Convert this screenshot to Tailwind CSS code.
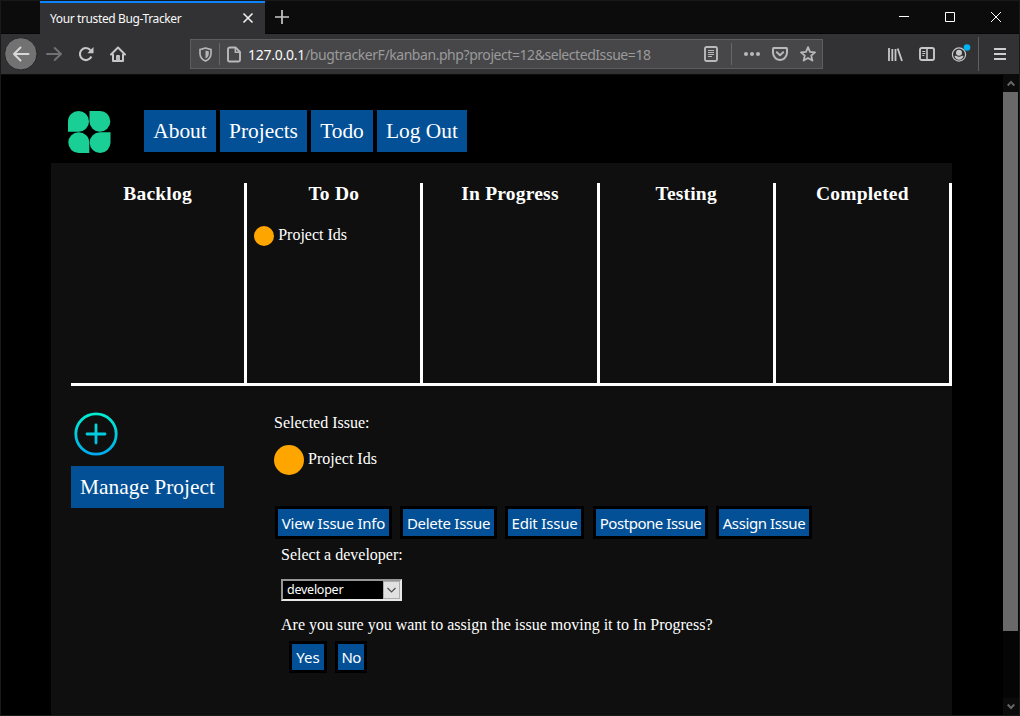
<!DOCTYPE html>
<html lang="en">
<head>
<meta charset="utf-8">
<title>Your trusted Bug-Tracker</title>
<script src="https://cdn.jsdelivr.net/npm/@tailwindcss/browser@4"></script>
</head>
<body class="w-[1020px] h-[716px] overflow-hidden bg-black text-white">
<div class="relative flex flex-col w-[1020px] h-[716px] overflow-hidden border border-[#191919] font-['Noto_Sans',sans-serif]">
  <!-- Tab strip -->
  <header class="flex h-[33px] shrink-0 bg-[#0c0c0d] border-b border-[#050505]">
    <div class="flex items-center w-[225px] h-[33px] ml-[39px] pl-[10px] pr-[11px] border-t-2 border-[#0a84ff] bg-[#323234]">
      <span class="text-[12px] leading-[16px] tracking-[-0.38px] whitespace-nowrap text-[#f9f9fa]">Your trusted Bug-Tracker</span>
      <svg class="ml-auto mb-[2px]" width="12" height="12" viewBox="0 0 12 12" fill="none" stroke="#f0f0f0" stroke-width="1.600"><path d="M1.500 1.500l9 9M10.500 1.500l-9 9"/></svg>
    </div>
    <svg class="ml-[9px] mt-[8px]" width="16" height="16" viewBox="0 0 16 16" fill="none" stroke="#c8c8c9" stroke-width="1.700"><path d="M1 8h14M8 1v14"/></svg>
    <div class="flex ml-auto mr-[18px] mt-[10px] gap-[35px]">
      <svg width="11" height="11" viewBox="0 0 11 11" stroke="#fff" fill="none"><path d="M1 5.500h10"/></svg>
      <svg width="11" height="11" viewBox="0 0 11 11" stroke="#fff" fill="none"><path d="M1.500 1.500h9v9h-9z"/></svg>
      <svg width="11" height="11" viewBox="0 0 11 11" stroke="#fff" fill="none"><path d="M1 1l10 10M11 1L1 11"/></svg>
    </div>
  </header>
  <!-- Navigation toolbar -->
  <div class="flex items-center h-[41px] shrink-0 bg-[#323234] border-b border-[#0c0c0d] pl-[3px]">
    <svg width="34" height="34" viewBox="0 0 34 34" fill="none"><circle cx="16.800" cy="16.800" r="16.200" fill="#727273" stroke="#242425"/><path d="M24.500 17H10M16.500 10.500L10 17l6.500 6.500" stroke="#d8d8d8" stroke-width="2" stroke-linecap="round" stroke-linejoin="round"/></svg>
    <svg class="ml-[7px]" width="18" height="16" viewBox="0 0 18 16" fill="none" stroke="#717172" stroke-width="2" stroke-linecap="round" stroke-linejoin="round"><path d="M2 8h14M9.700 2L16 8l-6.300 6"/></svg>
    <svg class="ml-[15px]" width="16" height="16" viewBox="0 0 16 16" fill="none" stroke="#c7c7c8" stroke-width="2.100"><path d="M12.500 4.200A6 6 0 1 0 13.400 10.500"/><path d="M15.500 1v6.200H9.300z" fill="#c7c7c8" stroke="none"/></svg>
    <svg class="ml-[15px]" width="18" height="18" viewBox="0 0 18 18" fill="none" stroke="#c7c7c8" stroke-width="2" stroke-linecap="round" stroke-linejoin="round"><path d="M2 9.500L9 2.500l7 7M4 9.500V16h10V9.500"/><path d="M8 16v-5h2v5" stroke-width="1.800"/></svg>
    <div class="flex items-center w-[633px] h-[30px] ml-[63px] border border-[#5e5e60] bg-[#474749]">
      <svg class="ml-[8px]" width="13" height="15" viewBox="0 0 13 15" fill="none" stroke="#b5b5b6" stroke-width="1.700"><path d="M1 2.500Q3.500 2 6.500 1 9.500 2 12 2.500V7Q11.500 12 6.500 14 1.500 12 1 7z"/><path d="M6.500 3.500Q8.500 4 9.800 4.300V7Q9.500 10.300 6.500 11.500z" fill="#b5b5b6" stroke="none"/></svg>
      <div class="w-px h-[22px] ml-[7px] mr-[7px] bg-[#68686a]"></div>
      <svg width="14" height="17" viewBox="0 0 14 17" fill="none" stroke="#b9b9ba" stroke-width="1.900" stroke-linejoin="round"><path d="M3 1.500h5.500L13 6v8q0 1.500-1.500 1.500h-9Q1 15.500 1 14V3.500q0-2 2-2z"/><path d="M8.300 1.500V6.300H13" stroke-width="1.500"/></svg>
      <span class="ml-[7px] mt-[2px] text-[14px] leading-[20px] whitespace-nowrap text-[#f9f9fa]"><span class="tracking-[-0.25px]">127.0.0.1</span><span class="tracking-[-0.44px] text-[#9a9a9b]">/bugtrackerF/kanban.php?project=12&amp;selectedIssue=18</span></span>
      <div class="flex items-center ml-auto mr-[6px]">
        <svg width="14" height="16" viewBox="0 0 14 16" fill="none" stroke="#b9b9ba"><rect x="1" y="1" width="12" height="14" rx="1.500" stroke-width="1.900"/><path d="M4 4.500h6M4 6.500h6M4 8.500h6M4 10.500h4"/></svg>
        <div class="w-px h-[22px] ml-[13px] mr-[12px] bg-[#68686a]"></div>
        <svg width="16" height="4" viewBox="0 0 16 4" fill="#b9b9ba"><circle cx="2" cy="2" r="2"/><circle cx="8" cy="2" r="2"/><circle cx="14" cy="2" r="2"/></svg>
        <svg class="ml-[12px]" width="16" height="14" viewBox="0 0 16 14" fill="none" stroke="#b9b9ba" stroke-width="2" stroke-linecap="round" stroke-linejoin="round"><path d="M1.500 1h13Q15 1 15 2v4.200Q14 12.500 8 13 2 12.500 1 6.200V2Q1 1 1.500 1z"/><path d="M4.800 5.300L8 8.300l3.200-3"/></svg>
        <svg class="ml-[12px]" width="16" height="16" viewBox="0 0 16 16" fill="none" stroke="#b9b9ba" stroke-width="1.800" stroke-linejoin="round"><path d="M8 1.200l2 4.600 5 .5-3.800 3.300 1.200 5L8 12l-4.400 2.600 1.200-5L1 6.300l5-.5z"/></svg>
      </div>
    </div>
    <div class="flex items-center ml-auto mr-[13px]">
      <svg width="16" height="15" viewBox="0 0 16 15" fill="none" stroke="#c7c7c8" stroke-width="1.800"><path d="M2 1v13M5.300 2v12M8.500 2v12M10.700 1.500l4.300 12.500"/></svg>
      <svg class="ml-[16px]" width="16" height="14" viewBox="0 0 16 14" fill="none" stroke="#c7c7c8"><rect x="1" y="1" width="14" height="12" rx="1.800" stroke-width="1.900"/><path d="M8 1v12" stroke-width="1.600"/><path d="M3.300 4.500h3M3.300 6.500h3M3.300 8.500h2"/></svg>
      <svg class="ml-[16px] mb-[4px]" width="20" height="19" viewBox="0 0 20 19" fill="none"><circle cx="8" cy="11.500" r="6.600" stroke="#c7c7c8" stroke-width="1.200"/><circle cx="8" cy="9.700" r="3" fill="#c7c7c8"/><path d="M3.500 13q2-.5 3 .4 1.500.8 3 0 1-.9 3-.4-1 3.700-4.500 3.700T3.500 13z" fill="#c7c7c8"/><circle cx="16" cy="4.500" r="3.300" fill="#00b3f4"/></svg>
      <div class="w-px h-[34px] ml-[7px] mr-[15px] bg-[#606062]"></div>
      <svg width="12" height="14" viewBox="0 0 12 14" stroke="#cfcfcf" stroke-width="2"><path d="M0 2h12M0 7h12M0 12h12"/></svg>
    </div>
  </div>
  <!-- Page -->
  <div class="flex flex-1 min-h-0">
    <main class="flex-1 h-full pl-[50px] pr-[51px] pt-[35px] overflow-hidden bg-black font-['Liberation_Serif',serif]">
      <nav class="flex h-[53px] pl-[17px] gap-1 text-[21.400px] leading-[42px] text-center whitespace-nowrap">
        <svg class="mr-[29px]" width="43" height="43" viewBox="0 0 43 43" fill="#1acf96"><path d="M10.600 1A10.400 10.400 0 1 1 10.600 21.800H0V11.500A10.500 10.500 0 0 1 10.600 1z"/><path d="M21.500 1H32A10.400 10.400 0 1 1 21.500 11.400z"/><path d="M10.700 22.200A10.500 10.500 0 0 1 21.300 32.700V43H10.700A10.400 10.400 0 0 1 10.700 22.200z"/><path d="M32 22.200H42.500V32.600A10.400 10.400 0 1 1 32 22.200z"/></svg>
        <a class="w-[72px] h-[42px] bg-[#035096]">About</a>
        <a class="w-[87px] h-[42px] bg-[#035096]">Projects</a>
        <a class="w-[62px] h-[42px] bg-[#035096]">Todo</a>
        <a class="w-[90px] h-[42px] bg-[#035096]">Log Out</a>
      </nav>
      <div class="h-[560px] pt-5 pl-5 bg-[#0f0f0f]">
        <section class="grid grid-cols-5 h-[203px] border-b-[3px] border-white text-[19.500px] leading-[21px] tracking-[0.200px]">
          <div class="border-r-[3px] border-white text-center"><h3 class="font-bold">Backlog</h3></div>
          <div class="border-r-[3px] border-white">
            <h3 class="font-bold text-center">To Do</h3>
            <div class="flex items-center mt-[22px] pl-[7px] gap-1 text-[16px] leading-[20px] tracking-normal">
              <span class="size-5 rounded-full bg-[#ffa500]"></span><span class="-mt-[2px]">Project Ids</span>
            </div>
          </div>
          <div class="border-r-[3px] border-white text-center"><h3 class="font-bold">In Progress</h3></div>
          <div class="border-r-[3px] border-white text-center"><h3 class="font-bold">Testing</h3></div>
          <div class="border-r-[3px] border-white text-center"><h3 class="font-bold">Completed</h3></div>
        </section>
        <section class="flex">
          <div class="w-[203px] pt-[26px]">
            <svg class="ml-[3px]" width="44" height="44" viewBox="0 0 44 44" fill="none" stroke="url(#ring)" stroke-linecap="round"><defs><linearGradient id="ring" gradientUnits="userSpaceOnUse" x1="0" y1="0" x2="0" y2="44"><stop stop-color="#00f2d0"/><stop offset="1" stop-color="#00a8ef"/></linearGradient></defs><circle cx="22" cy="22" r="20.200" stroke-width="2.800"/><path d="M13 22h18M22 13v18" stroke-width="2.800"/></svg>
            <a class="block w-[153px] h-[42px] mt-[10px] bg-[#035096] text-[21.400px] leading-[42px] text-center whitespace-nowrap">Manage Project</a>
          </div>
          <div class="flex-1 pt-[27px] text-[16px] leading-5 whitespace-nowrap">
            <p>Selected Issue:</p>
            <div class="flex items-center mt-[12px] gap-1"><span class="size-[30px] rounded-full bg-[#ffa500]"></span><span class="-mt-[3px]">Project Ids</span></div>
            <div class="flex mt-[31px] ml-[1px] font-['Noto_Sans',sans-serif] text-[15px] leading-[28px] text-center">
              <button class="w-[117px] h-[33px] mr-[8px] border-[3px] border-black bg-[#035096] tracking-[-0.2px]">View Issue Info</button>
              <button class="w-[97px] h-[33px] mr-[8px] border-[3px] border-black bg-[#035096] tracking-[-0.3px]">Delete Issue</button>
              <button class="w-[79px] h-[33px] mr-[9px] border-[3px] border-black bg-[#035096] tracking-[-0.2px]">Edit Issue</button>
              <button class="w-[115px] h-[33px] mr-[8px] border-[3px] border-black bg-[#035096] tracking-[-0.45px]">Postpone Issue</button>
              <button class="w-[96px] h-[33px] border-[3px] border-black bg-[#035096] tracking-[-0.4px]">Assign Issue</button>
            </div>
            <div class="pl-[7px]">
              <p class="mt-[6px]">Select a developer:</p>
              <div class="flex w-[121px] h-[22px] mt-[14px] border-2 border-t-[#969696] border-l-[#969696] border-r-[#e9e9e9] border-b-[#e9e9e9] bg-black font-['Noto_Sans',sans-serif] text-[12.500px] leading-[18px]">
                <span class="pl-1 tracking-[-0.250px]">developer</span>
                <span class="flex items-center justify-center w-[17px] h-[18px] ml-auto border border-[#adadad] bg-[#e1e1e1]"><svg width="9" height="6" viewBox="0 0 9 6" fill="none" stroke="#505050" stroke-width="1.200"><path d="M.5 1l4 4 4-4"/></svg></span>
              </div>
              <p class="mt-[14px]">Are you sure you want to assign the issue moving it to In Progress?</p>
              <div class="flex mt-[6px] ml-[8px] gap-[8px] font-['Noto_Sans',sans-serif] text-[15px] leading-[26px] text-center">
                <button class="w-[38px] h-[32px] border-[3px] border-black bg-[#035096]">Yes</button>
                <button class="w-[32px] h-[32px] border-[3px] border-black bg-[#035096] tracking-[-0.700px]">No</button>
              </div>
            </div>
          </div>
        </section>
      </div>
    </main>
    <div class="flex flex-col w-[16px] h-full bg-[#050505]">
      <div class="flex items-center justify-center h-[17px] bg-[#0b0b0c]"><svg width="8" height="7" viewBox="0 0 8 7" fill="none" stroke="#666" stroke-width="2"><path d="M.7 5.500L4 2l3.300 3.500"/></svg></div>
      <div class="h-[539px] w-[15px] bg-[#696969]"></div>
      <div class="flex items-center justify-center h-[17px] mt-auto bg-[#0b0b0c]"><svg width="8" height="7" viewBox="0 0 8 7" fill="none" stroke="#666" stroke-width="2"><path d="M.7 1.500L4 5l3.300-3.500"/></svg></div>
    </div>
  </div>
</div>
</body>
</html>
